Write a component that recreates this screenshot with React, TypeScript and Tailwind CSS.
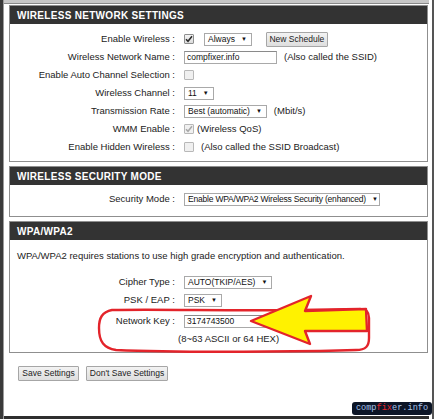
import React from 'react';

const font = "font-['Liberation_Sans',Arial,sans-serif]";

const Checkbox: React.FC<{ checked?: boolean; disabled?: boolean }> = ({ checked, disabled }) => (
  <span
    className={`flex h-[10px] w-[10px] shrink-0 items-center justify-center rounded-[1px] border ${
      disabled ? 'border-[#b8b8b8] bg-[#f0f0f0]' : 'border-[#8e8f8f] bg-gradient-to-b from-[#f4f4f4] to-[#dcdcdc]'
    }`}
  >
    {checked && (
      <svg width="8" height="8" viewBox="0 0 8 8">
        <path
          d="M1 4.2 L3 6.3 L7 1.2"
          fill="none"
          stroke={disabled ? '#a8a8a8' : '#2a2a2a'}
          strokeWidth="1.5"
        />
      </svg>
    )}
  </span>
);

const Select: React.FC<{ text: string; className?: string }> = ({ text, className = '' }) => (
  <span
    className={`flex h-[13px] shrink-0 items-center gap-[6px] whitespace-nowrap border border-[#a9a9a9] bg-white pl-[3px] pr-[4px] text-[8.5px] leading-none text-[#111] ${className}`}
  >
    <span>{text}</span>
    <span className="text-[6px]">▼</span>
  </span>
);

const TextInput: React.FC<{ value: string; className?: string }> = ({ value, className = '' }) => (
  <span
    className={`flex h-[13px] shrink-0 items-center whitespace-nowrap border border-[#a9a9a9] border-t-[#8a8a8a] bg-white pl-[2px] text-[8.5px] leading-none text-[#111] ${className}`}
  >
    {value}
  </span>
);

const Button: React.FC<{ children: React.ReactNode; className?: string }> = ({ children, className = '' }) => (
  <span
    className={`flex h-[15px] shrink-0 items-center justify-center whitespace-nowrap rounded-[1px] border border-[#a6a6a6] bg-gradient-to-b from-[#f3f3f3] to-[#dedede] text-[8.5px] leading-none text-[#222] ${className}`}
  >
    {children}
  </span>
);

const Row: React.FC<{ label: string; children: React.ReactNode }> = ({ label, children }) => (
  <div className="grid h-[18px] grid-cols-[165px_1fr] items-center gap-[9px]">
    <span className="whitespace-nowrap text-right text-[9.5px] text-[#222]">{label}&nbsp;:</span>
    <div className="flex items-center gap-[7px] whitespace-nowrap text-[9.5px] text-[#222]">{children}</div>
  </div>
);

const Section: React.FC<{ title: string; className?: string; children: React.ReactNode }> = ({
  title,
  className = '',
  children,
}) => (
  <section className="border border-[#8f8f8f] bg-white">
    <h2 className="flex h-[18px] items-center bg-[#333333] pl-[7px] text-[10px] font-bold tracking-[0.3px] text-white">
      {title}
    </h2>
    <div className={className}>{children}</div>
  </section>
);

export default function App() {
  return (
    <div className={`relative flex h-[419px] w-[434px] overflow-hidden bg-white ${font}`}>
      <div className="w-[3px] bg-[#3a3a3a]" />
      <div className="w-[1px] bg-[#9c9c9c]" />

      <div className="flex flex-1 flex-col">
        <div className="h-[3px] bg-[#c8c8c8]" />
        <div className="h-[1px] bg-[#8a8a8a]" />

        <div className="flex flex-1 flex-col gap-[4px] pl-[5px] pr-[1px] pt-[1px]">
          <Section title="WIRELESS NETWORK SETTINGS" className="pb-[5px] pt-[6px]">
            <Row label="Enable Wireless">
              <Checkbox checked />
              <Select text="Always" className="ml-[3px]" />
              <Button className="ml-[7px] h-[14px] w-[62px]">New Schedule</Button>
            </Row>
            <Row label="Wireless Network Name">
              <TextInput value="compfixer.info" className="w-[93px]" />
              <span>(Also called the SSID)</span>
            </Row>
            <Row label="Enable Auto Channel Selection">
              <Checkbox disabled />
            </Row>
            <Row label="Wireless Channel">
              <Select text="11" />
            </Row>
            <Row label="Transmission Rate">
              <Select text="Best (automatic)" />
              <span>(Mbit/s)</span>
            </Row>
            <Row label="WMM Enable">
              <div className="flex items-center gap-[3px]">
                <Checkbox checked disabled />
                <span>(Wireless QoS)</span>
              </div>
            </Row>
            <Row label="Enable Hidden Wireless">
              <Checkbox disabled />
              <span>(Also called the SSID Broadcast)</span>
            </Row>
          </Section>

          <Section title="WIRELESS SECURITY MODE" className="pb-[8px] pt-[5px]">
            <Row label="Security Mode">
              <Select
                text="Enable WPA/WPA2 Wireless Security (enhanced)"
                className="w-[196px] justify-between tracking-[-0.2px]"
              />
            </Row>
          </Section>

          <Section title="WPA/WPA2" className="pb-[4px] pt-[7px]">
            <p className="mb-[8px] flex h-[18px] items-center whitespace-nowrap pl-[7px] text-[9.5px] text-[#222]">
              WPA/WPA2 requires stations to use high grade encryption and authentication.
            </p>
            <Row label="Cipher Type">
              <Select text="AUTO(TKIP/AES)" />
            </Row>
            <Row label="PSK / EAP">
              <Select text="PSK" />
            </Row>
            <div className="mt-[3px]">
              <Row label="Network Key">
                <TextInput value="3174743500" className="w-[100px]" />
              </Row>
            </div>
            <div className="grid h-[18px] grid-cols-[165px_1fr] items-center gap-[9px]">
              <span />
              <span className="-ml-[6px] whitespace-nowrap text-[9.5px] text-[#222]">(8~63 ASCII or 64 HEX)</span>
            </div>
          </Section>

          <div className="mt-[9px] flex gap-[7px] pl-[9px]">
            <Button className="w-[61px]">Save Settings</Button>
            <Button className="w-[82px]">Don&apos;t Save Settings</Button>
          </div>
        </div>

        <div className="h-[3px] bg-[#2e2e2e]" />
      </div>

      <div className="w-[3px] bg-white" />
      <div className="w-[2px] bg-[#555555]" />

      {/* red marker loop and arrow drawn over the key field */}
      <svg className="pointer-events-none absolute left-0 top-0" width="434" height="419" viewBox="0 0 434 419">
        <path
          d="M112 310 C 102 312, 99 318, 99 328 C 99 342, 104 348, 116 350 C 160 352, 250 352, 320 351 L 356 350 C 366 350, 369 346, 369 338 L 369 318 C 369 312, 366 309, 360 309 L 300 310 C 230 311, 160 309, 112 310 Z"
          fill="none"
          stroke="#e3242b"
          strokeWidth="2.4"
          strokeLinejoin="round"
        />
        <polygon
          points="251,321 311,296 305,311 366,309 367,331 305,331 310,344"
          fill="#fff200"
          stroke="#e3242b"
          strokeWidth="2.4"
          strokeLinejoin="round"
        />
      </svg>

      <div className="absolute left-[352px] top-[402px] flex h-[13px] w-[80px] items-center justify-center rounded-[3px] bg-[#0c1526] font-['Liberation_Mono',monospace] text-[8.6px] leading-none text-[#a9c4ec]">
        comp<span className="text-[#e8262c]">fix</span>er.info
      </div>
    </div>
  );
}
